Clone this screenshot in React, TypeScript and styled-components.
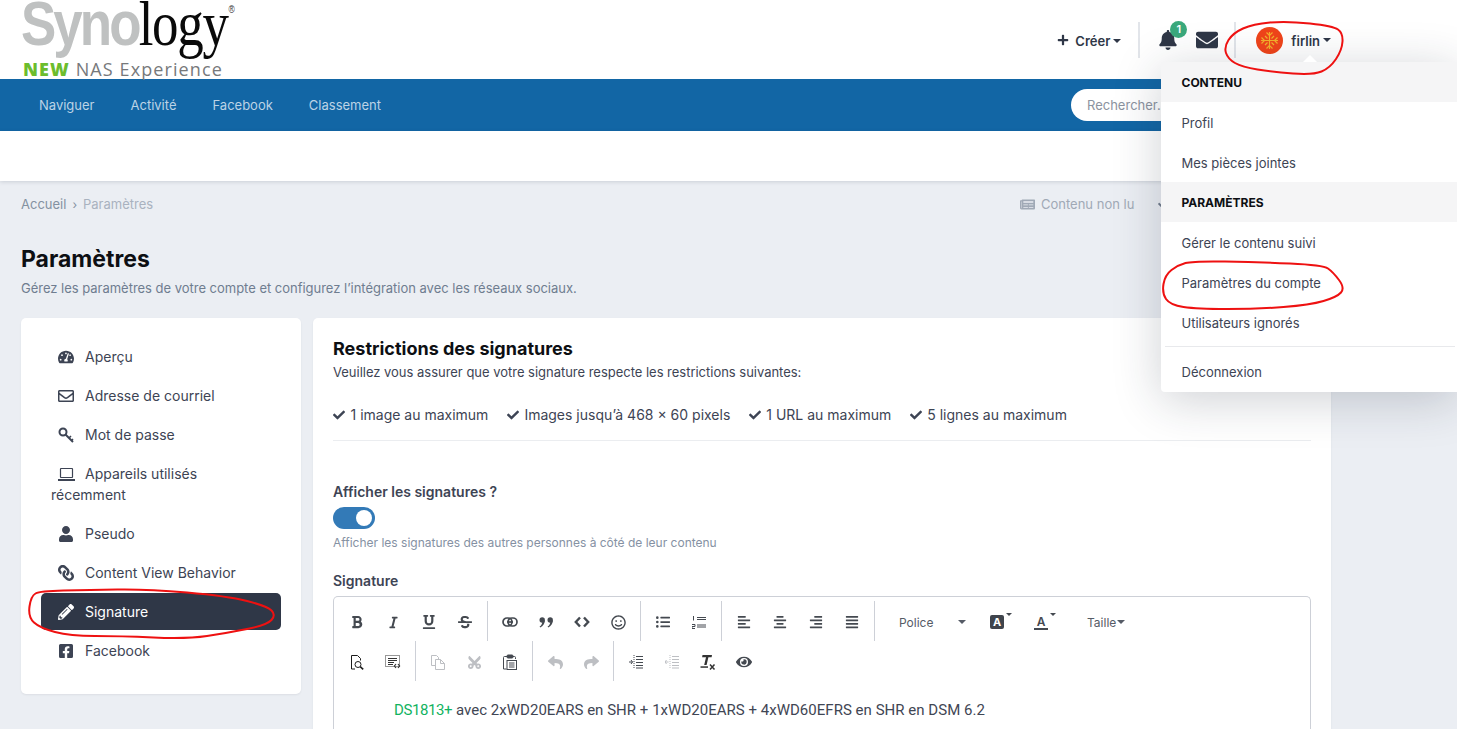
import React from 'react';
import styled, { createGlobalStyle } from 'styled-components';
import {
  FaAlignCenter,
  FaAlignJustify,
  FaAlignLeft,
  FaAlignRight,
  FaBell,
  FaBold,
  FaCheck,
  FaCut,
  FaEnvelope,
  FaEye,
  FaFacebookSquare,
  FaItalic,
  FaLink,
  FaListUl,
  FaNewspaper,
  FaPencilAlt,
  FaPlus,
  FaRegEnvelope,
  FaRegSmile,
  FaReply,
  FaShare,
  FaStrikethrough,
  FaTachometerAlt,
  FaUnderline,
  FaUser,
} from 'react-icons/fa';

const GlobalStyle = createGlobalStyle`
  html, body {
    margin: 0;
    height: 100%;
    overflow: hidden;
    background: #ebeef3;
  }
  body {
    font-family: 'Inter', 'Liberation Sans', sans-serif;
    font-size: 14px;
    color: #3d4454;
  }
`;

const Page = styled.div`
  position: relative;
  width: 1457px;
  height: 729px;
  overflow: hidden;
`;

const Header = styled.header`
  display: flex;
  align-items: flex-start;
  justify-content: space-between;
  height: 79px;
  padding: 0 126px 0 21px;
  background: #fff;
`;

const Logo = styled.div`
  display: flex;
  flex-direction: column;
  width: 215px;
`;

const LogoMark = styled.div`
  display: flex;
  align-items: baseline;
  height: 56px;
  line-height: 46px;
  font-size: 63px;
  white-space: nowrap;
  transform: scaleX(0.84);
  transform-origin: left center;
`;

const LogoGrey = styled.span`
  font-family: 'Liberation Sans', sans-serif;
  font-weight: 700;
  letter-spacing: -3.5px;
  color: #bfc1c1;
`;

const LogoBlack = styled.span`
  font-family: 'Liberation Serif', serif;
  letter-spacing: -1.5px;
  color: #0a0a0a;
`;

const LogoReg = styled.sup`
  font-family: 'Liberation Sans', sans-serif;
  font-size: 10px;
  line-height: 0;
  color: #333;
  align-self: flex-start;
  margin: 10px 0 0 1px;
`;

const LogoTag = styled.div`
  margin: 3px 0 0 2px;
  font-family: 'Open Sans', sans-serif;
  font-size: 18px;
  letter-spacing: 1.1px;
  line-height: 20px;
  color: #77797b;
  white-space: nowrap;
`;

const LogoNew = styled.b`
  font-weight: 800;
  color: #6cbd2d;
`;

const UserBar = styled.div`
  display: flex;
  align-items: center;
  margin-top: 22px;
  height: 36px;
`;

const BarButton = styled.div`
  display: flex;
  align-items: center;
  padding-top: 2px;
  font-size: 13px;
  font-weight: 600;
  color: #2f3747;
`;

const PlusIcon = styled(FaPlus)`
  margin: -2px 6px 0 0;
  font-size: 12px;
`;

const Caret = styled.span<{ $color?: string }>`
  display: inline-block;
  width: 0;
  height: 0;
  border-left: 4px solid transparent;
  border-right: 4px solid transparent;
  border-top: 4px solid ${(props) => props.$color || '#2f3747'};
`;

const BarCaret = styled(Caret)`
  margin-left: 3px;
`;

const BarDivider = styled.span<{ $left: number; $right: number }>`
  width: 2px;
  height: 36px;
  background: #e2e5ea;
  margin: 0 ${(props) => props.$right}px 0 ${(props) => props.$left}px;
`;

const BellWrap = styled.div`
  position: relative;
  display: flex;
  color: #2f3747;
  font-size: 20px;
  margin-right: 18px;
`;

const Badge = styled.span`
  position: absolute;
  top: -9px;
  left: 12px;
  width: 17px;
  height: 17px;
  border-radius: 50%;
  background: #3aa97c;
  color: #fff;
  font-size: 11px;
  font-weight: 600;
  line-height: 17px;
  text-align: center;
`;

const MailIcon = styled(FaEnvelope)`
  font-size: 22px;
  color: #2f3747;
`;

const UserName = styled.span`
  margin-left: 8px;
  padding-top: 2px;
  font-size: 13px;
  font-weight: 600;
  color: #2f3747;
`;

const NavBar = styled.nav`
  display: flex;
  align-items: center;
  gap: 36px;
  height: 52px;
  padding-left: 39px;
  background: #1266a5;
`;

const NavLink = styled.a`
  font-size: 13px;
  color: #bcd3e6;
`;

const SearchPill = styled.div`
  margin: 0 186px 0 auto;
  width: 200px;
  height: 32px;
  padding-left: 16px;
  box-sizing: border-box;
  border-radius: 16px;
  background: #fff;
  color: #8b93a0;
  font-size: 13px;
  line-height: 32px;
`;

const SubNav = styled.div`
  height: 50px;
  background: #fff;
  box-shadow: 0 1px 4px rgba(40, 50, 70, 0.16);
`;

const Content = styled.main`
  padding: 0 126px 0 21px;
`;

const CrumbRow = styled.div`
  display: flex;
  align-items: center;
  height: 46px;
  font-size: 13px;
`;

const Crumb = styled.span<{ $muted?: boolean }>`
  color: ${(props) => (props.$muted ? '#a9b2bf' : '#8491a1')};
`;

const CrumbSep = styled.span`
  margin: 0 6px;
  font-size: 12px;
  color: #8491a1;
`;

const QuickLinks = styled.div`
  display: flex;
  align-items: center;
  gap: 6px;
  margin-left: auto;
  color: #a0a9b6;
  font-size: 13px;
  width: 311px;
`;

const QuickCheck = styled(FaCheck)`
  margin-left: 18px;
  font-size: 10px;
  color: #6f7a8b;
`;

const PageTitle = styled.h1`
  margin: 16px 0 0;
  font-size: 23px;
  font-weight: 700;
  line-height: 32px;
  color: #0d0f13;
`;

const PageDesc = styled.p`
  margin: 3px 0 0;
  font-size: 13px;
  letter-spacing: -0.02px;
  line-height: 20px;
  color: #6f7d90;
`;

const Columns = styled.div`
  display: flex;
  align-items: flex-start;
  gap: 12px;
  margin-top: 20px;
`;

const Card = styled.section`
  background: #fff;
  border-radius: 5px;
  box-shadow: 0 1px 2px rgba(40, 50, 70, 0.08);
`;

const Sidebar = styled(Card)`
  flex: 0 0 280px;
  box-sizing: border-box;
  height: 376px;
  padding: 19.5px 20px;
`;

const SideItem = styled.a<{ $active?: boolean }>`
  display: block;
  margin-bottom: 2px;
  padding: 8px 10px;
  border-radius: 5px;
  font-size: 14px;
  line-height: 21px;
  background: ${(props) => (props.$active ? '#2f3747' : 'transparent')};
  color: ${(props) => (props.$active ? '#fff' : '#3d4454')};
`;

const SideIcon = styled.span<{ $flip?: boolean }>`
  display: inline-block;
  width: 30px;
  margin-right: 4px;
  text-align: center;
  font-size: 16px;
  line-height: 1;
  vertical-align: -3px;

  svg {
    transform: ${(props) => (props.$flip ? 'scaleX(-1)' : 'none')};
  }
`;

const MainCard = styled(Card)`
  flex: 0 0 1018px;
  box-sizing: border-box;
  height: 600px;
  padding: 19px 20px;
`;

const SectionTitle = styled.h2`
  margin: 0;
  font-size: 18px;
  font-weight: 700;
  line-height: 24px;
  color: #0d0f13;
`;

const SectionText = styled.p`
  margin: 1px 0 0;
  font-size: 13px;
  letter-spacing: -0.02px;
  line-height: 20px;
`;

const Rules = styled.ul`
  display: flex;
  gap: 18.5px;
  margin: 0;
  padding: 23px 0 15px;
  list-style: none;
  border-bottom: 1px solid #ebedf0;
`;

const Rule = styled.li`
  display: flex;
  align-items: center;
  gap: 5.5px;
  font-size: 14px;
  line-height: 20px;

  svg {
    font-size: 12px;
  }
`;

const FieldLabel = styled.div<{ $top: number }>`
  margin-top: ${(props) => props.$top}px;
  font-size: 14px;
  font-weight: 600;
  line-height: 20px;
`;

const Toggle = styled.div`
  display: flex;
  align-items: center;
  justify-content: flex-end;
  box-sizing: border-box;
  width: 42px;
  height: 22px;
  margin-top: 5px;
  padding-right: 3px;
  border-radius: 11px;
  background: #337ab7;
`;

const ToggleKnob = styled.span`
  width: 16px;
  height: 16px;
  border-radius: 50%;
  background: #fff;
`;

const HelpText = styled.div`
  margin-top: 5px;
  font-size: 12px;
  line-height: 18px;
  color: #8591a3;
`;

const Editor = styled.div`
  margin-top: 5px;
  padding-top: 4px;
  border: 1px solid #cdd0d7;
  border-bottom: 0;
  border-radius: 5px 5px 0 0;
  height: 200px;
`;

const ToolRow = styled.div`
  display: flex;
  height: 40px;
  padding-left: 5px;
`;

const ToolGroup = styled.div<{ $last?: boolean }>`
  display: flex;
  align-items: center;
  padding: 2px 4px 0 0;
  margin-right: 4px;
  border-right: ${(props) => (props.$last ? '0' : '1px solid #cdd0d7')};
`;

const Tool = styled.span<{ $off?: boolean; $size?: number; $turn?: number }>`
  display: flex;
  align-items: center;
  justify-content: center;
  width: 36px;
  height: 38px;
  font-size: ${(props) => props.$size || 14}px;
  color: ${(props) => (props.$off ? '#bdbfc3' : '#444950')};

  svg {
    transform: rotate(${(props) => props.$turn || 0}deg);
  }
`;

const ToolSelect = styled.span<{ $width: number }>`
  display: flex;
  align-items: center;
  justify-content: space-between;
  box-sizing: border-box;
  width: ${(props) => props.$width}px;
  padding: 2px 9px 0 20px;
  font-size: 12px;
  color: #555b66;
`;

const ColorTool = styled.span<{ $width: number }>`
  position: relative;
  display: flex;
  align-items: center;
  justify-content: center;
  box-sizing: border-box;
  width: ${(props) => props.$width}px;
  height: 40px;
  padding-top: 2px;
  color: #444950;
`;

const ColorChip = styled.span`
  width: 14px;
  height: 14px;
  border-radius: 2px;
  background: #3f444c;
  color: #fff;
  font-size: 11px;
  font-weight: 700;
  line-height: 14px;
  text-align: center;
`;

const ColorLetter = styled.span`
  width: 14px;
  border-bottom: 2px solid #444950;
  font-size: 12px;
  font-weight: 600;
  line-height: 13px;
  text-align: center;
`;

const ColorCaret = styled.span`
  position: absolute;
  top: 12px;
  right: 7px;
  border-left: 3px solid transparent;
  border-right: 3px solid transparent;
  border-top: 3px solid #444950;
`;

const TextSize = styled.span`
  display: flex;
  align-items: center;
  gap: 1px;
  margin-left: 24px;
  padding-top: 2px;
  font-size: 12px;
  color: #555b66;
`;

const EditorBody = styled.div`
  padding: 19px 0 0 60px;
  font-family: 'Roboto', sans-serif;
  font-size: 15px;
  letter-spacing: 0.025px;
  line-height: 20px;
  color: #3f4654;
`;

const Model = styled.span`
  letter-spacing: -0.4px;
  color: #12b35f;
`;

const AccountMenu = styled.div`
  position: absolute;
  top: 62px;
  left: 1161px;
  width: 296px;
  height: 330px;
  border-radius: 4px 0 0 4px;
  background: #fff;
  box-shadow: 0 8px 48px rgba(30, 40, 60, 0.22);

  &::before {
    content: '';
    position: absolute;
    top: -7px;
    left: 142px;
    border-left: 7px solid transparent;
    border-right: 7px solid transparent;
    border-bottom: 7px solid #fff;
  }
`;

const MenuHead = styled.div`
  height: 40px;
  padding-left: 20.5px;
  background: #f5f5f6;
  font-size: 12px;
  font-weight: 700;
  line-height: 41px;
  color: #0d0f13;
`;

const MenuItem = styled.a`
  display: block;
  height: 40px;
  padding-left: 20.5px;
  font-size: 13px;
  line-height: 42px;
  color: #3d4454;
`;

const MenuRule = styled.div`
  height: 1px;
  margin: 4px 2px 4px 4px;
  background: #e8e9ec;
`;

const Scribbles = styled.svg`
  position: absolute;
  top: 0;
  left: 0;
  pointer-events: none;
`;

const Ink = styled.path`
  fill: none;
  stroke: #ee1111;
  stroke-width: 2;
`;

type Point = [number, number];

// smooth closed outline through hand-picked points
const outline = (points: Point[]) => {
  const mid = (a: Point, b: Point) => `${(a[0] + b[0]) / 2} ${(a[1] + b[1]) / 2}`;
  let d = `M${mid(points[points.length - 1], points[0])}`;
  points.forEach((p, i) => {
    d += ` Q${p[0]} ${p[1]} ${mid(p, points[(i + 1) % points.length])}`;
  });
  return d;
};

const userLoop: Point[] = [
  [1287, 21], [1333, 26], [1343, 33], [1342, 50], [1330, 68], [1313, 75], [1273, 72],
  [1242, 67], [1228, 59], [1224, 47], [1233, 33], [1253, 24],
];
const signatureLoop: Point[] = [
  [147, 589], [227, 596], [267, 606], [276, 615], [267, 625], [227, 633], [187, 639],
  [120, 636], [70, 636], [40, 628], [28, 617], [31, 596], [40, 591], [87, 590],
];
const accountLoop: Point[] = [
  [1193, 261], [1257, 262], [1323, 265], [1333, 272], [1345, 288], [1337, 297], [1310, 305],
  [1257, 309], [1197, 309], [1170, 305], [1162, 293], [1165, 275], [1178, 265],
];

const Avatar = () => (
  <svg width="27" height="27" viewBox="0 0 27 27">
    <circle cx="13.5" cy="13.5" r="13.5" fill="#f0441a" />
    <g stroke="#f4b12c" strokeWidth="1.2" fill="none">
      <path d="M13.5 5v17M5 13.5h17" />
      <path d="M10.5 5.5l3 3 3-3M10.5 21.5l3-3 3 3M5.5 10.5l3 3-3 3M21.5 10.5l-3 3 3 3" />
      <path d="M9 9l2.5 2.5M18 9l-2.5 2.5M9 18l2.5-2.5M18 18l-2.5-2.5" />
    </g>
  </svg>
);

const KeyIcon = () => (
  <svg width="16" height="16" viewBox="0 0 16 16" fill="none" stroke="currentColor">
    <circle cx="5" cy="5" r="3.5" strokeWidth="2" />
    <path d="M7.5 7.5L15 15" strokeWidth="2" />
    <path d="M11 11l2-2M13.5 13.5l1.5-1.5" strokeWidth="1.6" />
  </svg>
);

const LaptopIcon = () => (
  <svg width="17" height="15" viewBox="0 0 17 15" fill="none" stroke="currentColor">
    <rect x="2.5" y="1.5" width="12" height="9" rx="0.5" strokeWidth="1.2" />
    <path d="M0 13h17" strokeWidth="2" />
  </svg>
);

const ChainIcon = () => (
  <svg width="16" height="10" viewBox="0 0 16 10" fill="none" stroke="currentColor" strokeWidth="1.7">
    <rect x="1" y="1" width="9" height="8" rx="4" />
    <rect x="6" y="1" width="9" height="8" rx="4" />
    <path d="M5 5h6" />
  </svg>
);

const QuoteIcon = () => (
  <svg width="15" height="11" viewBox="0 0 15 11" fill="currentColor">
    <circle cx="3.2" cy="3" r="2.7" />
    <path d="M5.9 3c0 3.5-1.8 6.3-4.7 7.6l-.6-1C2.4 8.4 3.2 6.8 3.3 5z" />
    <circle cx="11.2" cy="3" r="2.7" />
    <path d="M13.9 3c0 3.5-1.8 6.3-4.7 7.6l-.6-1c1.8-1.2 2.6-2.8 2.7-4.6z" />
  </svg>
);

const TagsIcon = () => (
  <svg width="16" height="12" viewBox="0 0 16 12" fill="none" stroke="currentColor" strokeWidth="2.4">
    <path d="M6 1.5L1.8 6 6 10.5M10 1.5L14.2 6 10 10.5" />
  </svg>
);

const NumberedIcon = () => (
  <svg width="14" height="14" viewBox="0 0 14 14" fill="none" stroke="currentColor">
    <path d="M5 2.5h9M5 10h9M5 12h9M5 4.5h9" />
    <path d="M1.5 1v4.5M0 9.5h3v2H0v2h3" strokeWidth="1" />
  </svg>
);

const PreviewIcon = () => (
  <svg width="15" height="15" viewBox="0 0 15 15" fill="none" stroke="#1c1c1c" strokeWidth="1">
    <path d="M5 14H1.5V.5h6l3 3v2" />
    <circle cx="8" cy="9.5" r="3" />
    <path d="M10.2 11.7l3 2.6" strokeWidth="1.6" />
  </svg>
);

const SourceIcon = () => (
  <svg width="16" height="14" viewBox="0 0 16 14" fill="none" stroke="#333">
    <rect x="0.5" y="0.5" width="14" height="11" strokeDasharray="1 1" />
    <path d="M3 3.5h9M3 5.5h9M3 7.5h6M3 9.5h5" />
    <path d="M11 9l-1.6 2 1.6 2M13 9l1.6 2-1.6 2" strokeWidth="1.2" />
  </svg>
);

const CopyIcon = () => (
  <svg width="14" height="15" viewBox="0 0 14 15" fill="none" stroke="currentColor">
    <path d="M4.5 10.5H.5V.5h5l2 2V5" />
    <path d="M4.5 4.5h5l4 4v6h-9z" />
    <path d="M9.5 4.5v4h4" />
  </svg>
);

const PasteIcon = () => (
  <svg width="14" height="16" viewBox="0 0 14 16" fill="none" stroke="#444950">
    <path d="M4 2.5H1.5a1 1 0 0 0-1 1V15h3M10 2.5h1.5a1 1 0 0 1 1 1V5" />
    <rect x="4" y="1" width="6" height="3" rx="1" fill="#444950" />
    <rect x="4" y="6.5" width="9.5" height="9" />
    <path d="M6 9h5.5M6 11h5.5M6 13h5.5" />
  </svg>
);

const IndentIcon = ({ out }: { out?: boolean }) => (
  <svg width="14" height="14" viewBox="0 0 14 14" fill="none" stroke="currentColor">
    <path d="M7 1.5h7M7 4.5h7M7 7.5h7M7 10.5h7M7 13h7" />
    <path d="M5 0v14" strokeDasharray="1 1" />
    {out ? <path d="M3.5 7H0M1.5 5L0 7l1.5 2" /> : <path d="M0 7h3.5M2 5l1.5 2L2 9" />}
  </svg>
);

const ClearIcon = () => (
  <svg width="17" height="16" viewBox="0 0 17 16" fill="#333">
    <path d="M2.5 1h9.5l-.4 2.2H8.4L6.6 11H4.2L6 3.2H2.1z" />
    <rect x="0.5" y="12.3" width="7.5" height="1.5" />
    <path d="M10 10.5l4.5 5M14.5 10.5l-4.5 5" stroke="#333" strokeWidth="1.5" fill="none" />
  </svg>
);

const sideItems = [
  { label: 'Aperçu', icon: <FaTachometerAlt /> },
  { label: 'Adresse de courriel', icon: <FaRegEnvelope /> },
  { label: 'Mot de passe', icon: <KeyIcon /> },
  { label: 'Appareils utilisés récemment', icon: <LaptopIcon /> },
  { label: 'Pseudo', icon: <FaUser /> },
  { label: 'Content View Behavior', icon: <FaLink />, flip: true },
  { label: 'Signature', icon: <FaPencilAlt />, active: true },
  { label: 'Facebook', icon: <FaFacebookSquare /> },
];

const rules = [
  '1 image au maximum',
  'Images jusqu’à 468 × 60 pixels',
  '1 URL au maximum',
  '5 lignes au maximum',
];

export default function App() {
  return (
    <Page>
      <GlobalStyle />
      <Header>
        <Logo>
          <LogoMark>
            <LogoGrey>Syno</LogoGrey>
            <LogoBlack>logy</LogoBlack>
            <LogoReg>®</LogoReg>
          </LogoMark>
          <LogoTag>
            <LogoNew>NEW</LogoNew> NAS Experience
          </LogoTag>
        </Logo>
        <UserBar>
          <BarButton>
            <PlusIcon />
            Créer
            <BarCaret />
          </BarButton>
          <BarDivider $left={17} $right={18} />
          <BellWrap>
            <FaBell />
            <Badge>1</Badge>
          </BellWrap>
          <MailIcon />
          <BarDivider $left={16} $right={20} />
          <Avatar />
          <UserName>firlin</UserName>
          <BarCaret />
        </UserBar>
      </Header>
      <NavBar>
        <NavLink>Naviguer</NavLink>
        <NavLink>Activité</NavLink>
        <NavLink>Facebook</NavLink>
        <NavLink>Classement</NavLink>
        <SearchPill>Rechercher...</SearchPill>
      </NavBar>
      <SubNav />
      <Content>
        <CrumbRow>
          <Crumb>Accueil</Crumb>
          <CrumbSep>›</CrumbSep>
          <Crumb $muted>Paramètres</Crumb>
          <QuickLinks>
            <FaNewspaper size={15} />
            Contenu non lu
            <QuickCheck />
          </QuickLinks>
        </CrumbRow>
        <PageTitle>Paramètres</PageTitle>
        <PageDesc>Gérez les paramètres de votre compte et configurez l’intégration avec les réseaux sociaux.</PageDesc>
        <Columns>
          <Sidebar>
            {sideItems.map((item) => (
              <SideItem key={item.label} $active={item.active}>
                <SideIcon $flip={item.flip}>{item.icon}</SideIcon>
                {item.label}
              </SideItem>
            ))}
          </Sidebar>
          <MainCard>
            <SectionTitle>Restrictions des signatures</SectionTitle>
            <SectionText>Veuillez vous assurer que votre signature respecte les restrictions suivantes:</SectionText>
            <Rules>
              {rules.map((rule) => (
                <Rule key={rule}>
                  <FaCheck />
                  {rule}
                </Rule>
              ))}
            </Rules>
            <FieldLabel $top={41}>Afficher les signatures ?</FieldLabel>
            <Toggle>
              <ToggleKnob />
            </Toggle>
            <HelpText>Afficher les signatures des autres personnes à côté de leur contenu</HelpText>
            <FieldLabel $top={19}>Signature</FieldLabel>
            <Editor>
              <ToolRow>
                <ToolGroup>
                  <Tool><FaBold /></Tool>
                  <Tool $size={13}><FaItalic /></Tool>
                  <Tool><FaUnderline /></Tool>
                  <Tool><FaStrikethrough /></Tool>
                </ToolGroup>
                <ToolGroup>
                  <Tool><ChainIcon /></Tool>
                  <Tool><QuoteIcon /></Tool>
                  <Tool><TagsIcon /></Tool>
                  <Tool $size={15}><FaRegSmile /></Tool>
                </ToolGroup>
                <ToolGroup>
                  <Tool><FaListUl /></Tool>
                  <Tool><NumberedIcon /></Tool>
                </ToolGroup>
                <ToolGroup>
                  <Tool><FaAlignLeft /></Tool>
                  <Tool><FaAlignCenter /></Tool>
                  <Tool><FaAlignRight /></Tool>
                  <Tool><FaAlignJustify /></Tool>
                </ToolGroup>
                <ToolSelect $width={96}>
                  Police
                  <Caret $color="#555b66" />
                </ToolSelect>
                <ColorTool $width={44}>
                  <ColorChip>A</ColorChip>
                  <ColorCaret />
                </ColorTool>
                <ColorTool $width={44}>
                  <ColorLetter>A</ColorLetter>
                  <ColorCaret />
                </ColorTool>
                <TextSize>
                  Taille
                  <Caret $color="#555b66" />
                </TextSize>
              </ToolRow>
              <ToolRow>
                <ToolGroup>
                  <Tool><PreviewIcon /></Tool>
                  <Tool><SourceIcon /></Tool>
                </ToolGroup>
                <ToolGroup>
                  <Tool $off><CopyIcon /></Tool>
                  <Tool $off $size={15} $turn={-90}><FaCut /></Tool>
                  <Tool><PasteIcon /></Tool>
                </ToolGroup>
                <ToolGroup>
                  <Tool $off $size={15}><FaReply /></Tool>
                  <Tool $off $size={15}><FaShare /></Tool>
                </ToolGroup>
                <ToolGroup $last>
                  <Tool><IndentIcon /></Tool>
                  <Tool $off><IndentIcon out /></Tool>
                  <Tool><ClearIcon /></Tool>
                  <Tool $size={16}><FaEye /></Tool>
                </ToolGroup>
              </ToolRow>
              <EditorBody>
                <Model>DS1813+</Model> avec 2xWD20EARS en SHR + 1xWD20EARS + 4xWD60EFRS en SHR en DSM 6.2
              </EditorBody>
            </Editor>
          </MainCard>
        </Columns>
      </Content>
      <AccountMenu>
        <MenuHead>CONTENU</MenuHead>
        <MenuItem>Profil</MenuItem>
        <MenuItem>Mes pièces jointes</MenuItem>
        <MenuHead>PARAMÈTRES</MenuHead>
        <MenuItem>Gérer le contenu suivi</MenuItem>
        <MenuItem>Paramètres du compte</MenuItem>
        <MenuItem>Utilisateurs ignorés</MenuItem>
        <MenuRule />
        <MenuItem>Déconnexion</MenuItem>
      </AccountMenu>
      <Scribbles width="1457" height="729">
        <Ink d={outline(userLoop)} />
        <Ink d={outline(signatureLoop)} />
        <Ink d={outline(accountLoop)} />
      </Scribbles>
    </Page>
  );
}
